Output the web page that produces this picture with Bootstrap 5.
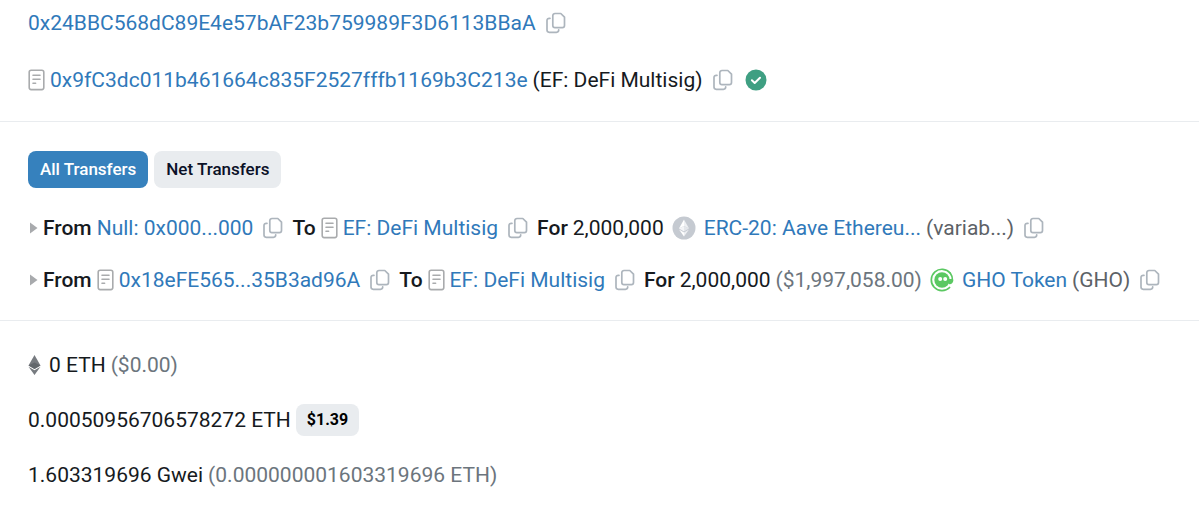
<!DOCTYPE html>
<html lang="en">
<head>
<meta charset="utf-8">
<meta name="viewport" content="width=device-width, initial-scale=1">
<title>Transaction details</title>
<link href="https://cdn.jsdelivr.net/npm/bootstrap@5.3.0/dist/css/bootstrap.min.css" rel="stylesheet">
<style>
  body { font-family: Roboto, "Liberation Sans", sans-serif; font-size: 21px; line-height: 32px; color: #161a1e; background: #fff; }
  a { color: #3079ba; text-decoration: none; }
  a:hover { text-decoration: underline; }
  .tx-section { padding: 0 28px; }
  .tx-section + .tx-section { border-top: 1px solid #e9ecef; }
  .tx-line { display: flex; flex-wrap: wrap; align-items: center; column-gap: 5px; min-height: 32px; }
  .tx-line svg { display: block; flex: none; }
  .tx-parties { display: grid; row-gap: 25px; padding-top: 7px; padding-bottom: 25px; }
  .tx-transfers { padding-top: 29px; padding-bottom: 24px; }
  .tx-values { display: grid; row-gap: 23px; padding-top: 28px; padding-bottom: 15px; }
  .tx-tabs { display: flex; gap: 6px; }
  .tx-list { display: grid; row-gap: 20px; margin-top: 24px; }
  .fw-label { font-weight: 500; }
  .tx-muted { color: #6c757d; }
  .tx-symbol { color: #5d6267; }
  .copy-btn { border: 0; background: none; padding: 0; margin: 0 4px 0 5px; color: #adb5bd; }
  .doc-icon { color: #a9abad; }
  .token-icon { margin: 0 3px; }
  .eth-icon { margin-right: 3px; }
  .tab-btn { font-size: 17px; font-weight: 500; line-height: 25px; padding: 6px 12px; border: 0; border-radius: 8px; color: #0b1127; background: #e9ecef; }
  .tab-btn.active { color: #fff; background: #3681bd; }
  .price-tag { font-size: 16px; font-weight: 700; line-height: 24px; padding: 4px 11px; border-radius: 8px; color: #000; background: #e9ecef; border: 0; }
  .caret { color: #a8aaad; }
</style>
</head>
<body>
<svg class="d-none" aria-hidden="true">
  <symbol id="copy" viewBox="0 0 20 22"><g fill="none" stroke="currentColor" stroke-width="1.7" stroke-linejoin="round" stroke-linecap="round"><path d="M9 1.5h5.800l3.700 3.700v8.300a2.200 2.200 0 0 1-2.200 2.200H9a2.200 2.200 0 0 1-2.200-2.200V3.700A2.200 2.200 0 0 1 9 1.500z"/><path d="M4 6.300h-.8A2.200 2.200 0 0 0 1 8.500v9.600a2.200 2.200 0 0 0 2.200 2.200h7.300a2.200 2.200 0 0 0 2.200-2.200v-.3"/></g></symbol>
  <symbol id="doc" viewBox="0 0 17 22"><g fill="none" stroke="currentColor" stroke-width="1.600" stroke-linecap="round"><rect x="1.200" y="1.200" width="14.600" height="19.400" rx="2"/><path d="M5 6.300h7M5 10.300h7M5 14.300h2.600"/></g></symbol>
</svg>

<main>
  <section class="tx-section tx-parties">
    <div class="tx-line">
      <a href="#">0x24BBC568dC89E4e57bAF23b759989F3D6113BBaA</a>
      <button class="copy-btn" type="button" aria-label="Copy address"><svg width="20" height="22"><use href="#copy"/></svg></button>
    </div>
    <div class="tx-line">
      <svg class="doc-icon" width="17" height="22"><use href="#doc"/></svg>
      <a href="#">0x9fC3dc011b461664c835F2527fffb1169b3C213e</a>
      <span>(EF: DeFi Multisig)</span>
      <button class="copy-btn" type="button" aria-label="Copy address"><svg width="20" height="22"><use href="#copy"/></svg></button>
      <svg class="token-icon" width="22" height="22" viewBox="0 0 22 22"><circle cx="11" cy="11" r="10.500" fill="#3f9f82"/><path d="M6.900 11.300l2.800 2.700 5.300-5.300" fill="none" stroke="#fff" stroke-width="2" stroke-linecap="round" stroke-linejoin="round"/></svg>
    </div>
  </section>

  <section class="tx-section tx-transfers">
    <div class="tx-tabs">
      <button class="tab-btn active" type="button">All Transfers</button>
      <button class="tab-btn" type="button">Net Transfers</button>
    </div>
    <div class="tx-list">
      <div class="tx-line">
        <svg class="caret" width="10" height="14" viewBox="0 0 10 14"><path d="M2 1.500v11L9.500 7z" fill="currentColor"/></svg>
        <span class="fw-label">From</span>
        <a href="#">Null: 0x000...000</a>
        <button class="copy-btn" type="button" aria-label="Copy address"><svg width="20" height="22"><use href="#copy"/></svg></button>
        <span class="fw-label">To</span>
        <svg class="doc-icon" width="17" height="22"><use href="#doc"/></svg>
        <a href="#">EF: DeFi Multisig</a>
        <button class="copy-btn" type="button" aria-label="Copy address"><svg width="20" height="22"><use href="#copy"/></svg></button>
        <span class="fw-label">For</span>
        <span>2,000,000</span>
        <svg class="token-icon" width="24" height="24" viewBox="0 0 24 24"><circle cx="12" cy="12" r="11.500" fill="#c5cad1"/><path d="M12 3.500v6.600l5 2.300z" fill="#eef0f3"/><path d="M12 3.500L7 12.400l5-2.300z" fill="#fff"/><path d="M12 10.100l5 2.300-5 3z" fill="#e3e6ea"/><path d="M12 10.100v5.300l-5-3z" fill="#f4f5f7"/><path d="M7 13.600l5 3v4z" fill="#fff"/><path d="M17 13.600l-5 3v4z" fill="#eef0f3"/></svg>
        <a href="#">ERC-20: Aave Ethereu...</a>
        <span class="tx-symbol">(variab...)</span>
        <button class="copy-btn" type="button" aria-label="Copy address"><svg width="20" height="22"><use href="#copy"/></svg></button>
      </div>
      <div class="tx-line">
        <svg class="caret" width="10" height="14" viewBox="0 0 10 14"><path d="M2 1.500v11L9.500 7z" fill="currentColor"/></svg>
        <span class="fw-label">From</span>
        <svg class="doc-icon" width="17" height="22"><use href="#doc"/></svg>
        <a href="#">0x18eFE565...35B3ad96A</a>
        <button class="copy-btn" type="button" aria-label="Copy address"><svg width="20" height="22"><use href="#copy"/></svg></button>
        <span class="fw-label">To</span>
        <svg class="doc-icon" width="17" height="22"><use href="#doc"/></svg>
        <a href="#">EF: DeFi Multisig</a>
        <button class="copy-btn" type="button" aria-label="Copy address"><svg width="20" height="22"><use href="#copy"/></svg></button>
        <span class="fw-label">For</span>
        <span>2,000,000</span>
        <span class="tx-muted">($1,997,058.00)</span>
        <svg class="token-icon" width="24" height="24" viewBox="0 0 24 24"><path d="M20.300 5.200A10.700 10.700 0 1 0 19.600 19.500" fill="none" stroke="#5bc862" stroke-width="1.700" stroke-linecap="round"/><path d="M20.300 5.200Q22.800 8.400 22.500 12.500 21.900 15.400 19.500 15.300" fill="none" stroke="#5bc862" stroke-width="1.700" stroke-linecap="round"/><circle cx="12" cy="12" r="7.700" fill="#5bc862"/><path d="M16 11h6v3.500q-2 1.700-4 0z" fill="#5bc862"/><circle cx="10.200" cy="11" r="2" fill="#fff"/><circle cx="15.200" cy="11" r="2" fill="#fff"/></svg>
        <a href="#">GHO Token</a>
        <span class="tx-symbol">(GHO)</span>
        <button class="copy-btn" type="button" aria-label="Copy address"><svg width="20" height="22"><use href="#copy"/></svg></button>
      </div>
    </div>
  </section>

  <section class="tx-section tx-values">
    <div class="tx-line">
      <svg class="eth-icon" width="13" height="22" viewBox="0 0 13 22"><path d="M6.500 1l6 10.400-6 3.500-6-3.500z" fill="#777b80"/><path d="M6.500 8.500l6 2.900-6 3.500-6-3.500z" fill="#62676c"/><path d="M.5 12.700l6 3.500 6-3.500-6 8.300z" fill="#777b80"/></svg>
      <span>0 ETH</span>
      <span class="tx-muted">($0.00)</span>
    </div>
    <div class="tx-line">
      <span>0.00050956706578272 ETH</span>
      <button class="price-tag" type="button">$1.39</button>
    </div>
    <div class="tx-line">
      <span>1.603319696 Gwei</span>
      <span class="tx-muted">(0.000000001603319696 ETH)</span>
    </div>
  </section>
</main>
<script src="https://cdn.jsdelivr.net/npm/bootstrap@5.3.0/dist/js/bootstrap.bundle.min.js"></script>
</body>
</html>
